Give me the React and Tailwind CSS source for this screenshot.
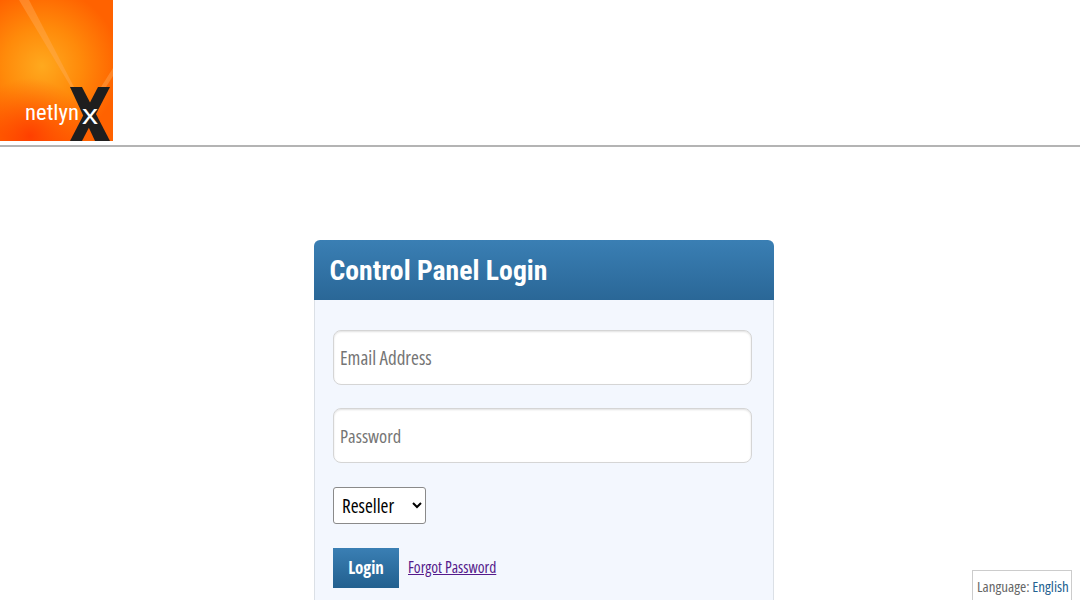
function Logo() {
  return (
    <svg width="113" height="141" viewBox="0 0 113 141" className="block">
      <defs>
        <radialGradient id="glow" gradientUnits="userSpaceOnUse" cx="42" cy="66" r="78">
          <stop offset="0" stopColor="#ffa91e" />
          <stop offset="0.5" stopColor="#ff8a0a" />
          <stop offset="1" stopColor="#ff6200" />
        </radialGradient>
        <radialGradient id="red" gradientUnits="userSpaceOnUse" cx="30" cy="136" r="58">
          <stop offset="0" stopColor="#ff3800" stopOpacity="0.85" />
          <stop offset="0.5" stopColor="#ff4400" stopOpacity="0.45" />
          <stop offset="1" stopColor="#ff5000" stopOpacity="0" />
        </radialGradient>
      </defs>
      <rect width="113" height="141" fill="url(#glow)" />
      <rect width="113" height="141" fill="url(#red)" />
      <polygon points="19,0 29,0 74,87 71,87" fill="#ffb060" opacity="0.4" />
      <polygon points="113,68 113,76 106,87 101,87" fill="#ffb060" opacity="0.4" />
      <polygon points="70,87 82,87 110,141 95,141" fill="#1e1e1e" />
      <polygon points="98,87 110,87 82,141 70,141" fill="#1e1e1e" />
      <text x="25" y="120" fill="#fff" fontSize="22" textLength="54" lengthAdjust="spacingAndGlyphs" fontFamily="'Roboto', sans-serif">netlyn</text>
      <text x="82" y="124" fill="#fff" fontSize="28" textLength="16" lengthAdjust="spacingAndGlyphs" fontFamily="'Liberation Sans', sans-serif">x</text>
    </svg>
  )
}

function App() {
  return (
    <div className="h-screen overflow-hidden bg-white font-['Open_Sans',sans-serif] [font-stretch:75%]">
      <header className="h-[146.5px] border-b-2 border-[#b4b4b4]">
        <Logo />
      </header>

      <div className="ml-[313.5px] mt-[93.5px] w-[460.5px] rounded-t-md">
        <h1 className="h-[60px] rounded-t-md bg-gradient-to-b from-[#3a7fb4] to-[#2a6797] pl-4 font-['Roboto',sans-serif] text-[27.7px] leading-[62px] font-bold text-white [font-stretch:75%]">
          Control Panel Login
        </h1>
        <form className="h-[400px] border-x border-[#dbe0e6] bg-[#f3f7fe] pl-[18.5px] pt-[30px]">
          <input
            placeholder="Email Address"
            className="block h-[55px] w-[419px] rounded-lg border border-[#d5d5d5] bg-white px-[6px] text-[19px] shadow-[inset_0_1px_2px_rgba(0,0,0,0.12)] placeholder:text-[#757575]"
          />
          <input
            placeholder="Password"
            className="mt-[23px] block h-[55px] w-[419px] rounded-lg border border-[#d5d5d5] bg-white px-[6px] text-[18.5px] shadow-[inset_0_1px_2px_rgba(0,0,0,0.12)] placeholder:text-[#757575]"
          />
          <select className="mt-[24px] block h-[37px] w-[93px] rounded-[3px] border border-[#8a8a8a] bg-white pl-[4px] text-[19px] text-black">
            <option>Reseller</option>
          </select>
          <div className="mt-[24px] flex items-center gap-[9px]">
            <button type="button" className="h-[40px] w-[66px] bg-gradient-to-b from-[#3a7fb4] to-[#22608f] text-[17px] font-bold text-white">
              Login
            </button>
            <a href="#" className="text-[15.5px] text-[#551a8b] underline">Forgot Password</a>
          </div>
        </form>
      </div>

      <div className="fixed bottom-0 right-[8px] h-[30px] w-[100px] border border-b-0 border-[#ccc] bg-white pl-[4px] pt-[5px] text-[15px] leading-[20px] whitespace-nowrap text-[#666]">
        Language: <span className="text-[#23618f]">English</span>
      </div>
    </div>
  )
}

export default App
